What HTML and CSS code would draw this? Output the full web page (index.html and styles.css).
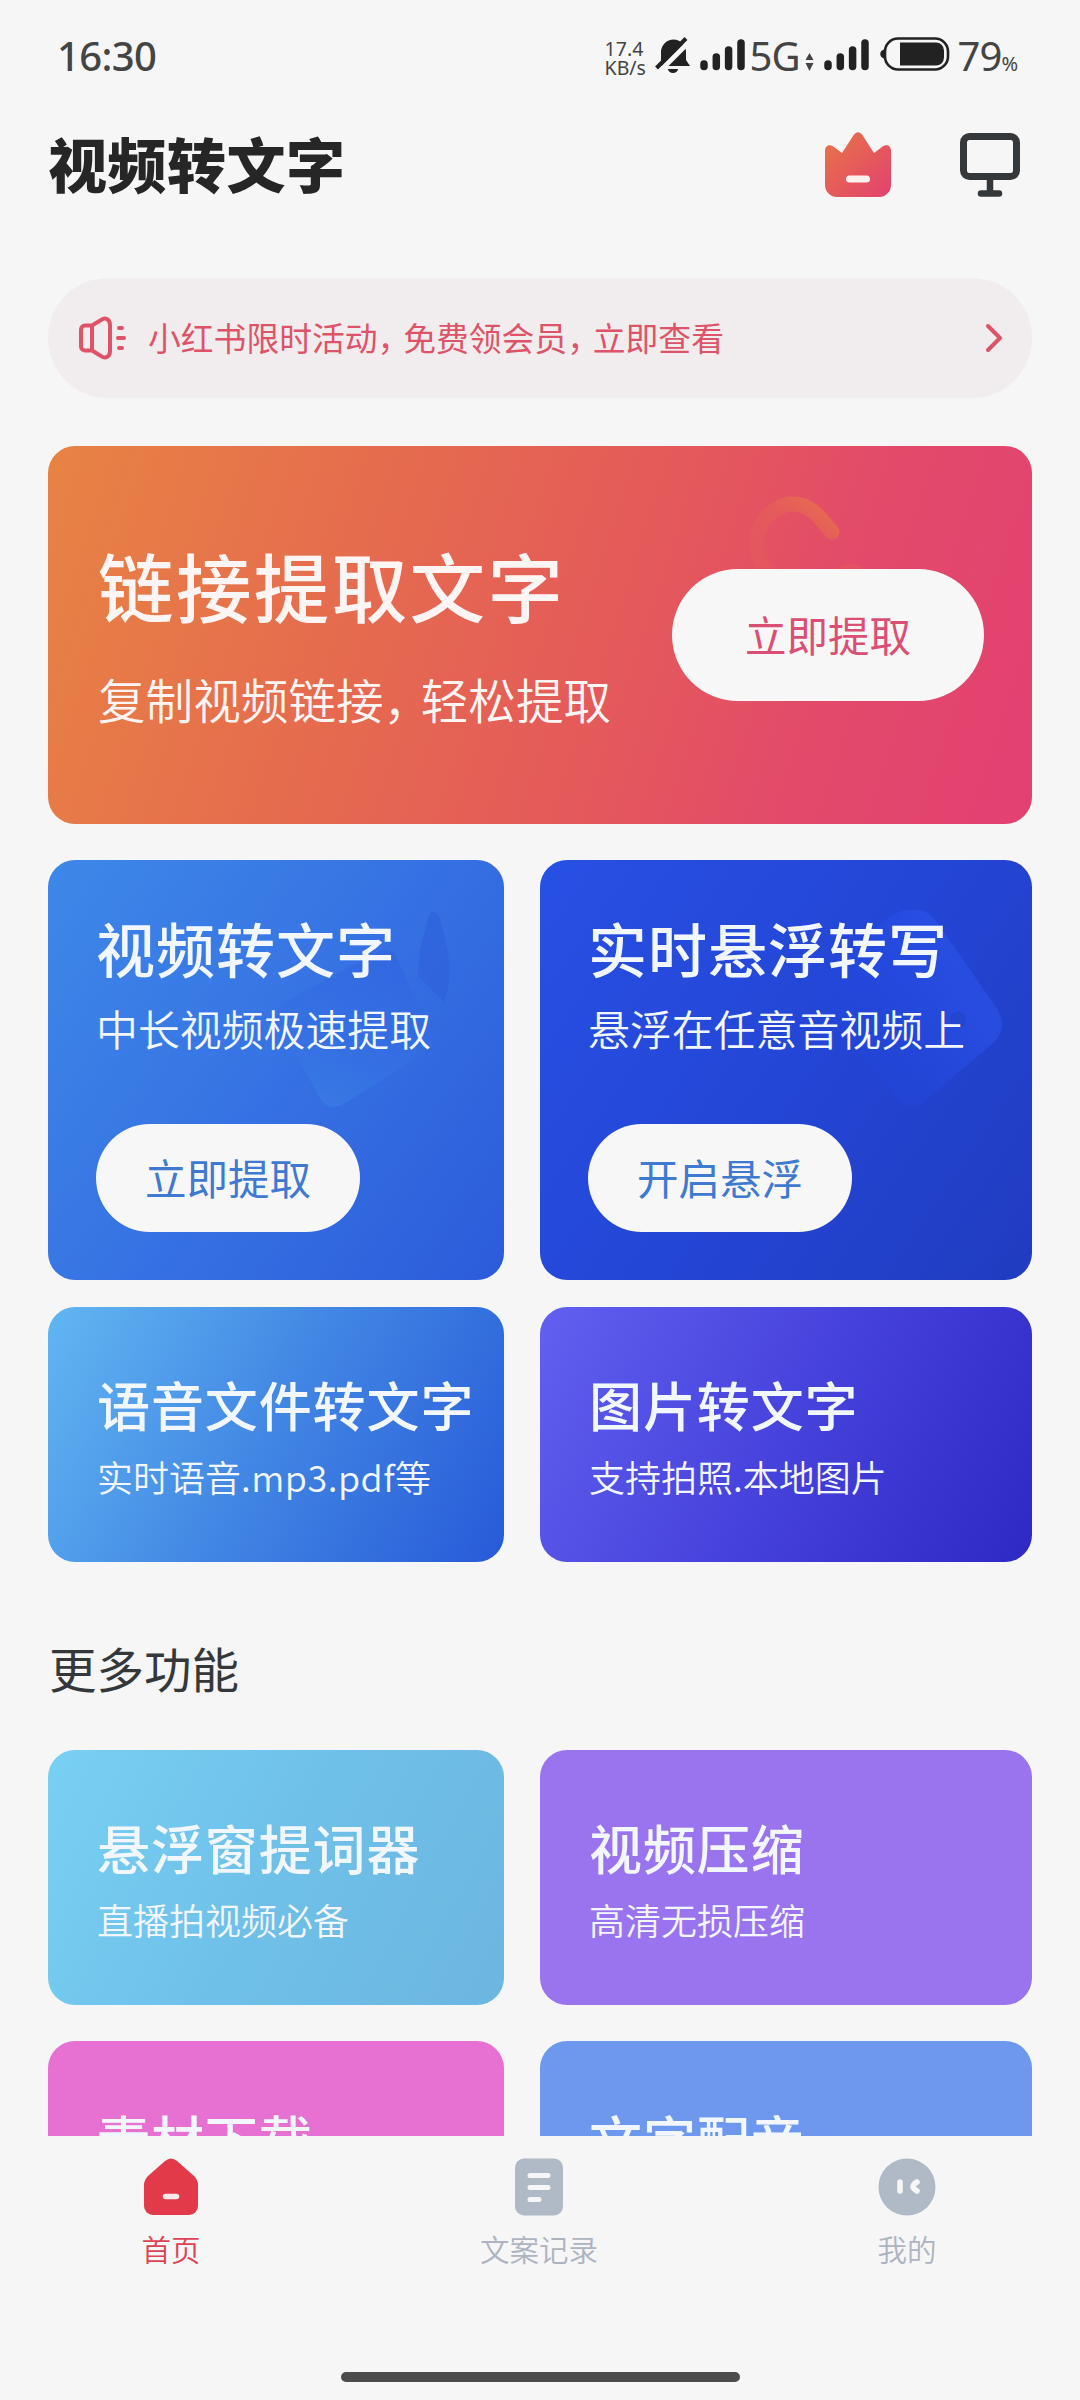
FILE: index.html
```html
<!DOCTYPE html>
<html lang="zh-CN">
<head>
    <meta charset="UTF-8">
    <title>视频转文字</title>
    <link rel="stylesheet" href="styles.css">
</head>
<body>
<div class="statusbar">
    <div class="time">16:30</div>
    <div class="status-right">
        <div class="speed">
            <div>17.4</div>
            <div>KB/s</div>
        </div>
        <svg class="bell" width="36" height="38" viewBox="0 0 36 38">
            <path d="M6 27V16a12.500 12.500 0 0 1 25 0v8l4 6H2z" fill="#222"/>
            <path d="M13 33h10a5 4 0 0 1-10 0z" fill="#222"/>
            <path d="M4 36L35 5" stroke="#f6f6f6" stroke-width="5"/>
            <path d="M1.500 32L31 2.500" stroke="#222" stroke-width="4"/>
        </svg>
        <svg class="signal" width="46" height="34" viewBox="0 0 46 34">
            <g stroke="#222" stroke-width="7.500" stroke-linecap="round">
                <path d="M4 26v2.500M16.300 19v9.500M28.600 12v16.500M41 5v23.500"/>
            </g>
        </svg>
        <div class="net">5G</div>
        <svg class="arrows" width="9" height="18" viewBox="0 0 9 18">
            <path d="M4.500 0L8.500 7H.5zM4.500 18L.5 10h8z" fill="#444"/>
        </svg>
        <svg class="signal second" width="46" height="34" viewBox="0 0 46 34">
            <g stroke="#222" stroke-width="7.500" stroke-linecap="round">
                <path d="M4 26v2.500M16.300 19v9.500M28.600 12v16.500M41 5v23.500"/>
            </g>
        </svg>
        <svg class="battery" width="70" height="34" viewBox="0 0 70 34">
            <path d="M4 12.500v9c-5-1-5-8 0-9z" fill="#222"/>
            <rect x="5" y="1.500" width="63" height="31" rx="13" fill="none" stroke="#222" stroke-width="2.600"/>
            <path d="M20 5.500h36a8 8 0 0 1 8 8v7a8 8 0 0 1-8 8H20z" fill="#222"/>
        </svg>
        <div class="level">79<span>%</span></div>
    </div>
</div>

<div class="header">
    <h1>视频转文字</h1>
    <div class="header-icons">
        <svg width="68" height="66" viewBox="0 0 68 66">
            <defs>
                <linearGradient id="crown" x1="0" y1="0" x2="1" y2="1">
                    <stop offset="0.100" stop-color="#e8704a"/>
                    <stop offset="1" stop-color="#e2416f"/>
                </linearGradient>
            </defs>
            <path d="M1 19c0-6 5-7 9-4l8 6L29 4c3-5 7-5 10 0l11 17 8-6c4-3 9-2 9 4v34a12 12 0 0 1-12 12H13A12 12 0 0 1 1 53z" fill="url(#crown)"/>
            <path d="M25.500 47h17" stroke="#fdf0f0" stroke-width="7" stroke-linecap="round"/>
        </svg>
        <svg width="60" height="64" viewBox="0 0 60 64">
            <rect x="3.500" y="3.500" width="53" height="40" rx="6" fill="none" stroke="#35383b" stroke-width="7"/>
            <path d="M30 44v16M21 60.500h18" fill="none" stroke="#35383b" stroke-width="6.500" stroke-linecap="round"/>
        </svg>
    </div>
</div>

<div class="notice">
    <svg width="50" height="44" viewBox="0 0 50 44" fill="none" stroke="#dd5468" stroke-width="4" stroke-linejoin="round" stroke-linecap="round">
        <path d="M15 9.500H8a4 4 0 0 0-4 4v17a4 4 0 0 0 4 4h7zL24 4c4-3 9-1 9 5v26c0 6-5 8-9 5l-9-5.500"/>
        <path d="M42 12h3M41 22h6M42 32h3"/>
    </svg>
    <p>小红书限时活动<i>，</i>免费领会员<i>，</i>立即查看</p>
    <svg class="chevron" width="18" height="30" viewBox="0 0 18 30">
        <path d="M3 3l12 12L3 27" fill="none" stroke="#dd5468" stroke-width="4" stroke-linecap="round" stroke-linejoin="round"/>
    </svg>
</div>

<div class="hero">
    <svg class="deco link-deco" width="130" height="120" viewBox="0 0 130 120" fill="none" stroke-width="15" stroke-linecap="round">
        <defs>
            <linearGradient id="hook" x1="0" y1="1" x2="1" y2="0">
                <stop offset="0.300" stop-color="#e8734a" stop-opacity="0.150"/>
                <stop offset="0.600" stop-color="#e8734a" stop-opacity="0.300"/>
                <stop offset="1" stop-color="#e8734a" stop-opacity="0.850"/>
            </linearGradient>
        </defs>
        <path d="M20 84C6 64 8 40 26 26s36-8 48 6l12 14" stroke="url(#hook)"/>
        <path d="M94 90q14-12 26 4" stroke="#e8734a" stroke-opacity="0.200"/>
    </svg>
    <div class="hero-text">
        <h2>链接提取文字</h2>
        <p>复制视频链接<i>，</i>轻松提取</p>
    </div>
    <button class="button hero-button">立即提取</button>
</div>

<div class="grid main-grid">
    <div class="card tall video">
        <svg class="deco" width="456" height="420" viewBox="0 0 456 420">
            <defs>
                <linearGradient id="clip" x1="0.300" y1="1" x2="0.500" y2="0">
                    <stop offset="0" stop-color="#3a86e8" stop-opacity="0.500"/>
                    <stop offset="0.350" stop-color="#3673e4" stop-opacity="0.400"/>
                    <stop offset="1" stop-color="#2f5fe0" stop-opacity="0.500"/>
                </linearGradient>
            </defs>
            <path d="M236 142L330 92q14-7 20 8l32 70q6 16-8 24l-78 50q-16 8-24-6l-42-76q-6-12 6-20z" fill="url(#clip)"/>
            <path d="M372 90l8-32q4-12 12 0l8 34q4 30-4 50l-26-26z" fill="#2b5ad8" fill-opacity="0.400"/>
        </svg>
        <h3>视频转文字</h3>
        <p>中长视频极速提取</p>
        <button class="button">立即提取</button>
    </div>
    <div class="card tall float">
        <svg class="deco" width="492" height="420" viewBox="0 0 492 420">
            <defs>
                <linearGradient id="tag" x1="0.200" y1="0.700" x2="0.800" y2="0.400">
                    <stop offset="0" stop-color="#2048e8" stop-opacity="0.150"/>
                    <stop offset="1" stop-color="#2b55ee" stop-opacity="0.550"/>
                </linearGradient>
            </defs>
            <path d="M350 56q32-16 48 8l60 86q10 20-6 34l-66 56q-16 14-30-2l-72-88q-16-22 4-38z" fill="url(#tag)"/>
            <circle cx="418" cy="160" r="8" fill="#2443cc" fill-opacity="0.800"/>
        </svg>
        <h3>实时悬浮转写</h3>
        <p>悬浮在任意音视频上</p>
        <button class="button">开启悬浮</button>
    </div>
    <div class="card voice">
        <h3>语音文件转文字</h3>
        <p>实时语音<span class="latin">.mp3.pdf</span>等</p>
    </div>
    <div class="card image">
        <h3>图片转文字</h3>
        <p>支持拍照.本地图片</p>
    </div>
</div>

<h2 class="section-title">更多功能</h2>

<div class="more">
    <div class="grid more-grid">
        <div class="card prompter">
            <h3>悬浮窗提词器</h3>
            <p>直播拍视频必备</p>
        </div>
        <div class="card compress">
            <h3>视频压缩</h3>
            <p>高清无损压缩</p>
        </div>
        <div class="card download">
            <h3>素材下载</h3>
        </div>
        <div class="card dubbing">
            <h3>文字配音</h3>
        </div>
    </div>
</div>

<nav class="tabbar">
    <a class="tab active">
        <svg width="58" height="58" viewBox="0 0 58 58">
            <path d="M23 3q6-5 12 0l17 15q4 4 4 9v21a9 9 0 0 1-9 9H11a9 9 0 0 1-9-9V27q0-5 4-9z" fill="#e23a48"/>
            <path d="M23.500 38.500h11" stroke="#fbe9ea" stroke-width="5.500" stroke-linecap="round"/>
        </svg>
        <span>首页</span>
    </a>
    <a class="tab">
        <svg width="58" height="58" viewBox="0 0 58 58">
            <rect x="5" y="0.500" width="48" height="57" rx="9" fill="#b0bac7"/>
            <path d="M20 17.500h18M20 29.500h18M20 41.500h9" stroke="#f6f6f6" stroke-width="5" stroke-linecap="round"/>
        </svg>
        <span>文案记录</span>
    </a>
    <a class="tab">
        <svg width="58" height="58" viewBox="0 0 58 58">
            <circle cx="29" cy="29" r="28.500" fill="#b0bac7"/>
            <path d="M22 24v9M39 24q-8 4.500 0 9" fill="none" stroke="#f6f6f6" stroke-width="5.500" stroke-linecap="round"/>
        </svg>
        <span>我的</span>
    </a>
</nav>
<div class="home-bar"></div>
</body>
</html>
```
FILE: styles.css
```css
* {
    box-sizing: border-box;
}

body {
    width: 1080px;
    height: 2400px;
    margin: 0;
    overflow: hidden;
    background-color: #f6f6f6;
    color: #2b2d2f;
    font-family: 'Noto Sans CJK SC', 'Noto Sans', sans-serif;
}

h1, h2, h3, p {
    margin: 0;
    font-weight: 400;
    white-space: nowrap;
}

i {
    font-style: normal;
    letter-spacing: -0.22em;
}

svg {
    display: block;
    flex-shrink: 0;
}

/* status bar */
.statusbar {
    display: flex;
    justify-content: space-between;
    height: 112px;
    padding: 0 63px 0 57px;
    font-family: 'Noto Sans', sans-serif;
    color: #444;
}

.time {
    font-size: 40px;
    line-height: 111px;
    font-weight: 500;
    letter-spacing: -0.6px;
}

.status-right {
    display: flex;
    align-items: flex-start;
}

.speed {
    width: 50px;
    padding-top: 39px;
    font-size: 19.500px;
    line-height: 19px;
}

.bell {
    margin-top: 36px;
}

.signal {
    margin: 38px 4px 0 9px;
}

.signal.second {
    margin: 38px 10px 0 10px;
}

.net, .level {
    font-size: 40px;
    line-height: 111px;
    letter-spacing: -1px;
}

.arrows {
    margin: 53px 0 0 5px;
}

.battery {
    margin: 37px 8px 0 0;
}

.level span {
    font-size: 20px;
}

/* title row */
.header {
    display: flex;
    justify-content: space-between;
    align-items: center;
    height: 106px;
    padding: 0 60px 0 48px;
}

h1 {
    margin-top: -5px;
    font-size: 59px;
    line-height: 80px;
    letter-spacing: 0.500px;
    font-weight: 900;
    color: #262626;
}

.header-icons {
    display: flex;
    align-items: center;
    gap: 68px;
}

.notice {
    display: flex;
    align-items: center;
    height: 120px;
    margin: 60px 48px 48px;
    padding: 0 29px 0 29px;
    border-radius: 60px;
    background-color: #f1ecee;
    color: #dd5468;
}

.notice p {
    margin: -3px 0 0 21px;
    font-size: 32.800px;
}

.chevron {
    margin-left: auto;
}

/* cards */
.hero {
    position: relative;
    display: flex;
    justify-content: space-between;
    align-items: center;
    height: 378px;
    margin: 0 48px 36px;
    padding: 0 48px 0 50px;
    border-radius: 27px;
    background: linear-gradient(108deg, #e88344 0%, #e5694f 35%, #e4585c 60%, #e34a6a 77%, #e24072 100%);
    color: #fcf5f4;
}

.hero-text {
    position: relative;
}

.hero h2 {
    margin-top: -5px;
    font-size: 75.500px;
    line-height: 104px;
    letter-spacing: 2.400px;
    font-weight: 500;
}

.hero p {
    margin-top: 29px;
    font-size: 47.600px;
    line-height: 68px;
    font-weight: 350;
}

.deco {
    position: absolute;
    left: 0;
    top: 0;
}

.link-deco {
    left: 698px;
    top: 40px;
}

.button {
    position: relative;
    display: block;
    width: 264px;
    height: 108px;
    padding: 0 0 2px;
    border: none;
    border-radius: 54px;
    background-color: #f7f7f7;
    color: #3f7ad0;
    font-family: inherit;
    font-size: 41.500px;
    font-weight: 400;
}

.hero-button {
    width: 312px;
    height: 132px;
    border-radius: 66px;
    color: #db4f74;
}

.grid {
    display: grid;
    grid-template-columns: 456px 492px;
    column-gap: 36px;
    padding: 0 48px;
}

.main-grid {
    row-gap: 27px;
}

.more-grid {
    row-gap: 36px;
}

.card {
    position: relative;
    height: 255px;
    padding: 62px 0 0 49px;
    border-radius: 27px;
    color: #f2f6fd;
}

.card h3 {
    position: relative;
    font-size: 53px;
    line-height: 70px;
    letter-spacing: 0.900px;
    font-weight: 500;
}

.card p {
    position: relative;
    margin-top: 12px;
    font-size: 36px;
    line-height: 50px;
    font-weight: 350;
}

.latin {
    letter-spacing: 0.5px;
}

.tall {
    height: 420px;
    padding: 48px 0 0 48px;
}

.tall h3 {
    font-size: 59px;
    line-height: 80px;
    letter-spacing: 1px;
}

.tall p {
    font-size: 41.900px;
    line-height: 56px;
}

.tall .button {
    margin-top: 68px;
}

.video {
    background: linear-gradient(125deg, #3e88e8 0%, #3672e3 50%, #2c5bda 100%);
}

.float {
    background: linear-gradient(125deg, #2750e4 0%, #2446d6 50%, #203cc0 100%);
}

.voice {
    background: linear-gradient(118deg, #62b6f2 0%, #4287e4 48%, #275ad8 100%);
}

.image {
    background: linear-gradient(118deg, #6160f0 0%, #4642dc 50%, #2e28c4 100%);
}

.section-title {
    height: 188px;
    padding: 71px 0 0 49px;
    font-size: 47.500px;
    line-height: 70px;
    color: #35383a;
}

.more {
    height: 386px;
    overflow: hidden;
}

.prompter {
    background: linear-gradient(118deg, #78d0f4 0%, #6fc0e8 50%, #6cb6e0 100%);
}

.compress {
    background-color: #9a74ee;
}

.download {
    background-color: #e671d2;
}

.dubbing {
    background-color: #6e98ee;
}

/* bottom tabs */
.tabbar {
    display: flex;
    justify-content: space-between;
    height: 236px;
    padding: 22px 73px 0 71px;
}

.tab {
    display: flex;
    flex-direction: column;
    align-items: center;
    width: 200px;
    font-size: 29.500px;
    line-height: 40px;
    font-weight: 350;
    color: #adb4bf;
}

.tab span {
    margin-top: 12px;
}

.tab.active {
    color: #dc4455;
}

.home-bar {
    width: 399px;
    height: 10px;
    margin: 0 auto;
    border-radius: 5px;
    background-color: #4c4c4c;
}
```
